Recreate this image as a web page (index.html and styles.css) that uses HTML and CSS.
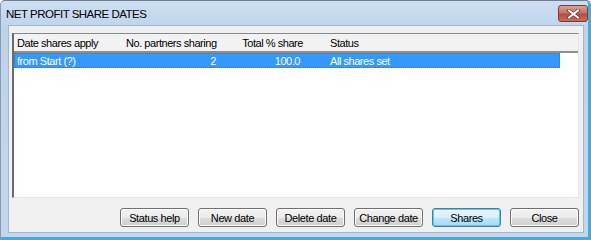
FILE: index.html
```html
<!DOCTYPE html>
<html lang="en">
<head>
    <meta charset="UTF-8">
    <title>Net Profit Share Dates</title>
    <link rel="stylesheet" href="styles.css">
</head>
<body>
    <div class="window">
        <div class="titlebar">
            <span class="title">NET PROFIT SHARE DATES</span>
            <div class="close-btn">
                <svg width="15" height="10" viewBox="0 0 15 10">
                    <path d="M3 1.5 L12 8.5 M12 1.5 L3 8.5" stroke="#5a2a24" stroke-width="3.4" stroke-linecap="square"/>
                    <path d="M3 1.5 L12 8.5 M12 1.5 L3 8.5" stroke="#ffffff" stroke-width="2" stroke-linecap="square"/>
                </svg>
            </div>
        </div>

        <div class="client">
            <div class="listview">
                <div class="lv-header">
                    <div class="col c1">Date shares apply</div>
                    <div class="col c2">No. partners sharing</div>
                    <div class="col c3">Total % share</div>
                    <div class="col c4">Status</div>
                </div>
                <div class="lv-row selected">
                    <div class="col c1">from Start (?)</div>
                    <div class="col c2">2</div>
                    <div class="col c3">100.0</div>
                    <div class="col c4">All shares set</div>
                </div>
            </div>

            <div class="buttons">
                <button class="btn">Status help</button>
                <button class="btn">New date</button>
                <button class="btn">Delete date</button>
                <button class="btn">Change date</button>
                <button class="btn default">Shares</button>
                <button class="btn">Close</button>
            </div>
        </div>
    </div>
</body>
</html>
```

FILE: styles.css
```css
body {
    margin: 0;
    background: #ffffff;
    font-family: "Liberation Sans", Arial, sans-serif;
}
.window {
    width: 591px;
    height: 240px;
    box-sizing: border-box;
    background: linear-gradient(#cddef1, #bdd3ea 30px, #c3d7ec);
    border-top: 1px solid #6e7e90;
    border-left: 1px solid #8a9bb0;
    border-right: 3px solid #40ade0;
    border-bottom: 3px solid #40ade0;
    border-top-left-radius: 5px;
    border-top-right-radius: 5px;
    display: flex;
    flex-direction: column;
}
.titlebar {
    height: 24px;
    display: flex;
    align-items: flex-start;
    justify-content: space-between;
    padding: 0 0 0 5px;
}
.title {
    font-size: 11.5px;
    color: #000;
    margin-top: 7px;
    letter-spacing: -0.5px;
}
.close-btn {
    width: 28px;
    height: 15px;
    margin-top: 4px;
    border: 1px solid #7e3a32;
    border-radius: 3px;
    background: linear-gradient(#dca294, #c9705f 45%, #b94c3f 55%, #cc6a58);
    display: flex;
    align-items: center;
    justify-content: center;
}
.close-btn svg {
    display: block;
}
.client {
    flex: 1;
    margin: 0 4px 4px 7px;
    background: #f0f0f0;
    border: 1px solid #a3b6cb;
    padding: 7px 4px 0 3px;
    display: flex;
    flex-direction: column;
}
.listview {
    height: 163px;
    background: #ffffff;
    border-top: 1px solid #828790;
    border-left: 2px solid #6b6b6b;
    border-right: 1px solid #e3e3e3;
    border-bottom: 1px solid #e3e3e3;
    font-size: 11px;
    letter-spacing: -0.45px;
}
.lv-header {
    display: flex;
    height: 17px;
    align-items: center;
    background: #f2f2f2;
    border-bottom: 2px solid #8e8e8e;
}
.lv-row {
    display: flex;
    height: 15px;
    align-items: center;
    width: 546px;
}
.lv-row.selected {
    background: #3399ff;
    color: #ffffff;
    outline: 1px dotted #7a6a50;
    outline-offset: -1px;
}
.col {
    white-space: nowrap;
    box-sizing: border-box;
}
.c1 {
    width: 112px;
    padding-left: 3px;
}
.c2 {
    width: 94px;
    text-align: right;
    padding-right: 4px;
}
.c3 {
    width: 84px;
    text-align: right;
    padding-right: 4px;
}
.c4 {
    padding-left: 26px;
}
.lv-header .c3 {
    padding-right: 1px;
}
.buttons {
    display: flex;
    justify-content: flex-end;
    gap: 9px;
    margin-top: 10px;
}
.btn {
    width: 69px;
    height: 19px;
    padding: 0;
    font-family: "Liberation Sans", Arial, sans-serif;
    font-size: 11px;
    letter-spacing: -0.4px;
    color: #000;
    border: 1px solid #707070;
    border-radius: 3px;
    background: linear-gradient(#f2f2f2, #ebebeb 50%, #dddddd 51%, #cfcfcf);
    box-shadow: inset 0 0 0 1px #fbfbfb;
}
.btn.default {
    border-color: #3c7fb1;
    background: linear-gradient(#eaf6fd, #d9f0fc 50%, #bee6fd 51%, #a7d9f5);
    box-shadow: inset 0 0 0 1px #48d0ff;
}
```
